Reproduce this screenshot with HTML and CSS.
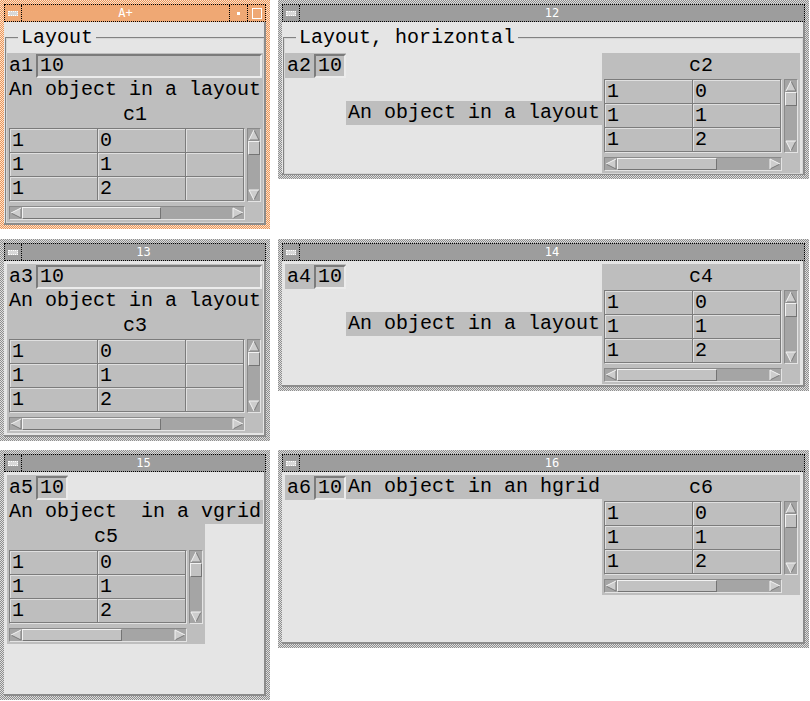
FILE: index.html
```html
<!DOCTYPE html>
<html>
<head>
<meta charset="utf-8">
<link rel="stylesheet" href="styles.css">
</head>
<body>

<!-- window A+ -->
<div class="win active w1">
  <div class="tbar">
    <div class="menu"><span class="mico"></span></div>
    <div class="ttl">A+</div>
    <div class="tbtn"><span class="minico"></span></div>
    <div class="tbtn"><span class="maxico"></span></div>
  </div>
  <div class="content fs">
    <fieldset class="grp"><legend>Layout</legend>
      <div class="vbox">
        <div class="field"><span class="lbl">a1</span><span class="inp">10</span></div>
        <div class="text">An object in a layout</div>
        <div class="tbox">
          <div class="tcap">c1</div>
          <div class="tmain">
            <div class="view">
              <div class="row"><span class="cell">1</span><span class="cell">0</span><span class="cell fill"></span></div>
              <div class="row"><span class="cell">1</span><span class="cell">1</span><span class="cell fill"></span></div>
              <div class="row"><span class="cell">1</span><span class="cell">2</span><span class="cell fill"></span></div>
            </div>
            <div class="vsb">
              <svg class="ar" width="12" height="12" viewBox="0 0 12 12"><polygon points="6,1 11,11 1,11" fill="#cdcdcd"/><polyline points="6,1 11,11 1,11" stroke="#7a7a7a" fill="none"/><polyline points="1,11 6,1" stroke="#f4f4f4" fill="none"/></svg>
              <span class="thumb"></span><span class="sp"></span>
              <svg class="ar" width="12" height="12" viewBox="0 0 12 12"><polygon points="1,1 11,1 6,11" fill="#cdcdcd"/><polyline points="11,1 6,11" stroke="#7a7a7a" fill="none"/><polyline points="6,11 1,1 11,1" stroke="#f4f4f4" fill="none"/></svg>
            </div>
          </div>
          <div class="hsb">
            <svg class="ar" width="12" height="12" viewBox="0 0 12 12"><polygon points="1,6 11,1 11,11" fill="#cdcdcd"/><polyline points="11,1 11,11 1,6" stroke="#7a7a7a" fill="none"/><polyline points="1,6 11,1" stroke="#f4f4f4" fill="none"/></svg>
            <div class="track"><span class="thumb"></span></div>
            <svg class="ar" width="12" height="12" viewBox="0 0 12 12"><polygon points="1,1 11,6 1,11" fill="#cdcdcd"/><polyline points="11,6 1,11" stroke="#7a7a7a" fill="none"/><polyline points="1,11 1,1 11,6" stroke="#f4f4f4" fill="none"/></svg>
          </div>
        </div>
      </div>
    </fieldset>
  </div>
</div>

<!-- window 12 -->
<div class="win w2">
  <div class="tbar">
    <div class="menu"><span class="mico"></span></div>
    <div class="ttl">12</div>
  </div>
  <div class="content fs">
    <fieldset class="grp"><legend>Layout, horizontal</legend>
      <div class="hbox">
        <div class="field"><span class="lbl">a2</span><span class="inp">10</span></div>
        <div class="text mid">An object in a layout</div>
        <div class="tbox">
          <div class="tcap">c2</div>
          <div class="tmain">
            <div class="view">
              <div class="row"><span class="cell">1</span><span class="cell">0</span></div>
              <div class="row"><span class="cell">1</span><span class="cell">1</span></div>
              <div class="row"><span class="cell">1</span><span class="cell">2</span></div>
            </div>
            <div class="vsb">
              <svg class="ar" width="12" height="12" viewBox="0 0 12 12"><polygon points="6,1 11,11 1,11" fill="#cdcdcd"/><polyline points="6,1 11,11 1,11" stroke="#7a7a7a" fill="none"/><polyline points="1,11 6,1" stroke="#f4f4f4" fill="none"/></svg>
              <span class="thumb"></span><span class="sp"></span>
              <svg class="ar" width="12" height="12" viewBox="0 0 12 12"><polygon points="1,1 11,1 6,11" fill="#cdcdcd"/><polyline points="11,1 6,11" stroke="#7a7a7a" fill="none"/><polyline points="6,11 1,1 11,1" stroke="#f4f4f4" fill="none"/></svg>
            </div>
          </div>
          <div class="hsb">
            <svg class="ar" width="12" height="12" viewBox="0 0 12 12"><polygon points="1,6 11,1 11,11" fill="#cdcdcd"/><polyline points="11,1 11,11 1,6" stroke="#7a7a7a" fill="none"/><polyline points="1,6 11,1" stroke="#f4f4f4" fill="none"/></svg>
            <div class="track"><span class="thumb"></span></div>
            <svg class="ar" width="12" height="12" viewBox="0 0 12 12"><polygon points="1,1 11,6 1,11" fill="#cdcdcd"/><polyline points="11,6 1,11" stroke="#7a7a7a" fill="none"/><polyline points="1,11 1,1 11,6" stroke="#f4f4f4" fill="none"/></svg>
          </div>
        </div>
      </div>
    </fieldset>
  </div>
</div>

<!-- window 13 -->
<div class="win w3">
  <div class="tbar">
    <div class="menu"><span class="mico"></span></div>
    <div class="ttl">13</div>
  </div>
  <div class="content">
    <div class="vbox">
      <div class="field"><span class="lbl">a3</span><span class="inp">10</span></div>
      <div class="text">An object in a layout</div>
      <div class="tbox">
        <div class="tcap">c3</div>
        <div class="tmain">
          <div class="view">
            <div class="row"><span class="cell">1</span><span class="cell">0</span><span class="cell fill"></span></div>
            <div class="row"><span class="cell">1</span><span class="cell">1</span><span class="cell fill"></span></div>
            <div class="row"><span class="cell">1</span><span class="cell">2</span><span class="cell fill"></span></div>
          </div>
          <div class="vsb">
            <svg class="ar" width="12" height="12" viewBox="0 0 12 12"><polygon points="6,1 11,11 1,11" fill="#cdcdcd"/><polyline points="6,1 11,11 1,11" stroke="#7a7a7a" fill="none"/><polyline points="1,11 6,1" stroke="#f4f4f4" fill="none"/></svg>
            <span class="thumb"></span><span class="sp"></span>
            <svg class="ar" width="12" height="12" viewBox="0 0 12 12"><polygon points="1,1 11,1 6,11" fill="#cdcdcd"/><polyline points="11,1 6,11" stroke="#7a7a7a" fill="none"/><polyline points="6,11 1,1 11,1" stroke="#f4f4f4" fill="none"/></svg>
          </div>
        </div>
        <div class="hsb">
          <svg class="ar" width="12" height="12" viewBox="0 0 12 12"><polygon points="1,6 11,1 11,11" fill="#cdcdcd"/><polyline points="11,1 11,11 1,6" stroke="#7a7a7a" fill="none"/><polyline points="1,6 11,1" stroke="#f4f4f4" fill="none"/></svg>
          <div class="track"><span class="thumb"></span></div>
          <svg class="ar" width="12" height="12" viewBox="0 0 12 12"><polygon points="1,1 11,6 1,11" fill="#cdcdcd"/><polyline points="11,6 1,11" stroke="#7a7a7a" fill="none"/><polyline points="1,11 1,1 11,6" stroke="#f4f4f4" fill="none"/></svg>
        </div>
      </div>
    </div>
  </div>
</div>

<!-- window 14 -->
<div class="win w4">
  <div class="tbar">
    <div class="menu"><span class="mico"></span></div>
    <div class="ttl">14</div>
  </div>
  <div class="content">
    <div class="hbox">
      <div class="field"><span class="lbl">a4</span><span class="inp">10</span></div>
      <div class="text mid">An object in a layout</div>
      <div class="tbox">
        <div class="tcap">c4</div>
        <div class="tmain">
          <div class="view">
            <div class="row"><span class="cell">1</span><span class="cell">0</span></div>
            <div class="row"><span class="cell">1</span><span class="cell">1</span></div>
            <div class="row"><span class="cell">1</span><span class="cell">2</span></div>
          </div>
          <div class="vsb">
            <svg class="ar" width="12" height="12" viewBox="0 0 12 12"><polygon points="6,1 11,11 1,11" fill="#cdcdcd"/><polyline points="6,1 11,11 1,11" stroke="#7a7a7a" fill="none"/><polyline points="1,11 6,1" stroke="#f4f4f4" fill="none"/></svg>
            <span class="thumb"></span><span class="sp"></span>
            <svg class="ar" width="12" height="12" viewBox="0 0 12 12"><polygon points="1,1 11,1 6,11" fill="#cdcdcd"/><polyline points="11,1 6,11" stroke="#7a7a7a" fill="none"/><polyline points="6,11 1,1 11,1" stroke="#f4f4f4" fill="none"/></svg>
          </div>
        </div>
        <div class="hsb">
          <svg class="ar" width="12" height="12" viewBox="0 0 12 12"><polygon points="1,6 11,1 11,11" fill="#cdcdcd"/><polyline points="11,1 11,11 1,6" stroke="#7a7a7a" fill="none"/><polyline points="1,6 11,1" stroke="#f4f4f4" fill="none"/></svg>
          <div class="track"><span class="thumb"></span></div>
          <svg class="ar" width="12" height="12" viewBox="0 0 12 12"><polygon points="1,1 11,6 1,11" fill="#cdcdcd"/><polyline points="11,6 1,11" stroke="#7a7a7a" fill="none"/><polyline points="1,11 1,1 11,6" stroke="#f4f4f4" fill="none"/></svg>
        </div>
      </div>
    </div>
  </div>
</div>

<!-- window 15 -->
<div class="win w5">
  <div class="tbar">
    <div class="menu"><span class="mico"></span></div>
    <div class="ttl">15</div>
  </div>
  <div class="content">
    <div class="vgrid">
      <div class="field"><span class="lbl">a5</span><span class="inp">10</span></div>
      <div class="text">An object  in a vgrid</div>
      <div class="tbox">
        <div class="tcap">c5</div>
        <div class="tmain">
          <div class="view">
            <div class="row"><span class="cell">1</span><span class="cell">0</span></div>
            <div class="row"><span class="cell">1</span><span class="cell">1</span></div>
            <div class="row"><span class="cell">1</span><span class="cell">2</span></div>
          </div>
          <div class="vsb">
            <svg class="ar" width="12" height="12" viewBox="0 0 12 12"><polygon points="6,1 11,11 1,11" fill="#cdcdcd"/><polyline points="6,1 11,11 1,11" stroke="#7a7a7a" fill="none"/><polyline points="1,11 6,1" stroke="#f4f4f4" fill="none"/></svg>
            <span class="thumb"></span><span class="sp"></span>
            <svg class="ar" width="12" height="12" viewBox="0 0 12 12"><polygon points="1,1 11,1 6,11" fill="#cdcdcd"/><polyline points="11,1 6,11" stroke="#7a7a7a" fill="none"/><polyline points="6,11 1,1 11,1" stroke="#f4f4f4" fill="none"/></svg>
          </div>
        </div>
        <div class="hsb">
          <svg class="ar" width="12" height="12" viewBox="0 0 12 12"><polygon points="1,6 11,1 11,11" fill="#cdcdcd"/><polyline points="11,1 11,11 1,6" stroke="#7a7a7a" fill="none"/><polyline points="1,6 11,1" stroke="#f4f4f4" fill="none"/></svg>
          <div class="track"><span class="thumb"></span></div>
          <svg class="ar" width="12" height="12" viewBox="0 0 12 12"><polygon points="1,1 11,6 1,11" fill="#cdcdcd"/><polyline points="11,6 1,11" stroke="#7a7a7a" fill="none"/><polyline points="1,11 1,1 11,6" stroke="#f4f4f4" fill="none"/></svg>
        </div>
      </div>
    </div>
  </div>
</div>

<!-- window 16 -->
<div class="win w6">
  <div class="tbar">
    <div class="menu"><span class="mico"></span></div>
    <div class="ttl">16</div>
  </div>
  <div class="content">
    <div class="hbox">
      <div class="field"><span class="lbl">a6</span><span class="inp">10</span></div>
      <div class="text">An object in an hgrid</div>
      <div class="tbox">
        <div class="tcap">c6</div>
        <div class="tmain">
          <div class="view">
            <div class="row"><span class="cell">1</span><span class="cell">0</span></div>
            <div class="row"><span class="cell">1</span><span class="cell">1</span></div>
            <div class="row"><span class="cell">1</span><span class="cell">2</span></div>
          </div>
          <div class="vsb">
            <svg class="ar" width="12" height="12" viewBox="0 0 12 12"><polygon points="6,1 11,11 1,11" fill="#cdcdcd"/><polyline points="6,1 11,11 1,11" stroke="#7a7a7a" fill="none"/><polyline points="1,11 6,1" stroke="#f4f4f4" fill="none"/></svg>
            <span class="thumb"></span><span class="sp"></span>
            <svg class="ar" width="12" height="12" viewBox="0 0 12 12"><polygon points="1,1 11,1 6,11" fill="#cdcdcd"/><polyline points="11,1 6,11" stroke="#7a7a7a" fill="none"/><polyline points="6,11 1,1 11,1" stroke="#f4f4f4" fill="none"/></svg>
          </div>
        </div>
        <div class="hsb">
          <svg class="ar" width="12" height="12" viewBox="0 0 12 12"><polygon points="1,6 11,1 11,11" fill="#cdcdcd"/><polyline points="11,1 11,11 1,6" stroke="#7a7a7a" fill="none"/><polyline points="1,6 11,1" stroke="#f4f4f4" fill="none"/></svg>
          <div class="track"><span class="thumb"></span></div>
          <svg class="ar" width="12" height="12" viewBox="0 0 12 12"><polygon points="1,1 11,6 1,11" fill="#cdcdcd"/><polyline points="11,6 1,11" stroke="#7a7a7a" fill="none"/><polyline points="1,11 1,1 11,6" stroke="#f4f4f4" fill="none"/></svg>
        </div>
      </div>
    </div>
  </div>
</div>

</body>
</html>
```

FILE: styles.css
```css
* { box-sizing: border-box; }
html, body { margin: 0; padding: 0; background: #fff; }
body {
  width: 810px; height: 701px; position: relative; overflow: hidden;
  font-family: "Liberation Mono", monospace; font-size: 20px; color: #000;
}

/* windows */
.win {
  position: absolute; padding: 4px; display: flex; flex-direction: column;
  background: repeating-conic-gradient(#8e8e8e 0 25%, #dedede 0 50%) 0 0 / 2px 2px;
}
.win.active {
  background: repeating-conic-gradient(#ea965a 0 25%, #fde2cc 0 50%) 0 0 / 2px 2px;
}
.w1 { left: 0; top: 0; width: 270px; height: 229px; }
.w2 { left: 278px; top: 0; width: 531px; height: 179px; }
.w3 { left: 0; top: 239px; width: 270px; height: 202px; }
.w4 { left: 278px; top: 239px; width: 531px; height: 152px; }
.w5 { left: 0; top: 450px; width: 270px; height: 250px; }
.w6 { left: 278px; top: 450px; width: 531px; height: 198px; }

/* title bar */
.tbar {
  height: 18px; flex: none; display: flex;
  border: 1px dotted #000; background: #9d9d9d; color: #fff;
  font: 12px/16px "DejaVu Sans Mono", monospace;
}
.active .tbar { background: #efa874; }
.menu {
  width: 17px; border-right: 1px dotted #000;
  display: flex; align-items: center; justify-content: center;
}
.mico {
  width: 10px; height: 5px; background: #d8d8d8;
  border: 1px dotted #fff;
}
.ttl { flex: 1; text-align: center; }
.tbtn {
  width: 18px; border-left: 1px dotted #000;
  display: flex; align-items: center; justify-content: center;
}
.minico { width: 3px; height: 3px; background: #fff; }
.maxico { width: 10px; height: 11px; border: 1px solid #fff; }

/* client area */
.content {
  flex: 1; min-height: 0; display: flex; flex-direction: column;
  background: #e5e5e5;
  border-right: 2px solid #8c8c8c; border-bottom: 2px solid #8c8c8c;
  padding: 3px 1px 0 3px;
}
.content.fs { padding: 4px 0 0 1px; }
.grp {
  flex: 1; min-width: 0; margin: 0; padding: 3px 0 0 0;
  border: 2px groove #d6d6d6; border-right-width: 1px; border-bottom-width: 1px;
}
.grp legend { margin-left: 11px; padding: 0 3px; line-height: 24px; }

.vbox { display: flex; flex-direction: column; align-items: stretch; }
.vgrid { display: flex; flex-direction: column; align-items: flex-start; }
.hbox { display: flex; align-items: flex-start; }
.hbox .mid { align-self: center; }

/* field */
.field { display: flex; background: #bebebe; padding-top: 1px; height: 25px; }
.lbl { line-height: 24px; padding: 0 3px 0 2px; }
.inp {
  height: 24px; line-height: 20px; padding: 0 2px;
  border: 2px solid; border-color: #7b7b7b #ececec #ececec #7b7b7b;
  background: #bebebe;
}
.vbox .inp { flex: 1; margin-right: 1px; }

.text { background: #bebebe; line-height: 24px; padding: 0 2px; white-space: pre; }

/* table */
.tbox { background: #bebebe; padding: 0 2px 2px; display: flex; flex-direction: column; }
.tcap { line-height: 26px; text-align: center; }
.tmain { display: flex; gap: 2px; }
.view {
  border: 1px solid; border-color: #7b7b7b #e2e2e2 #e2e2e2 #7b7b7b;
  background: #bebebe;
}
.vbox .view { flex: 1; min-width: 0; }
.row { display: flex; height: 24px; }
.cell {
  width: 88px; height: 24px; padding-left: 2px; line-height: 23px;
  border-right: 1px solid #7c7c7c; border-bottom: 1px solid #7c7c7c;
  box-shadow: inset 1px 1px 0 #e0e0e0;
}
.cell.fill { flex: 1; width: auto; min-width: 0; }

/* scrollbars */
.ar { display: block; flex: none; }
.vsb {
  width: 14px; flex: none; display: flex; flex-direction: column;
  background: #a5a5a5;
  border: 1px solid; border-color: #8a8a8a #e4e4e4 #e4e4e4 #8a8a8a;
}
.thumb {
  display: block; background: #c2c2c2;
  border: 1px solid; border-color: #f2f2f2 #747474 #747474 #f2f2f2;
}
.vsb .thumb { height: 14px; flex: none; }
.sp { flex: 1; }
.hsb {
  height: 14px; margin-top: 4px; margin-right: 16px; display: flex;
  background: #a5a5a5;
  border: 1px solid; border-color: #8a8a8a #e4e4e4 #e4e4e4 #8a8a8a;
}
.track { flex: 1; display: flex; }
.hsb .thumb { width: 66%; height: 12px; }
```
